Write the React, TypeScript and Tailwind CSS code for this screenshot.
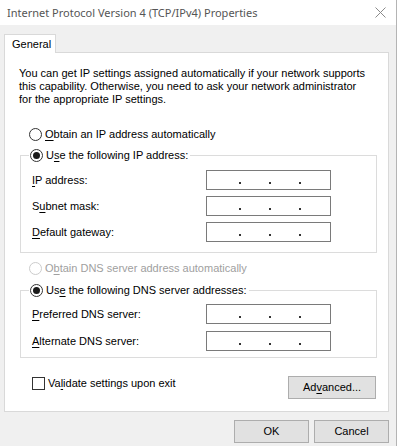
import type { ReactNode } from "react";

const body = "font-['Liberation_Sans',Arial,sans-serif]";
const title = "font-['Noto_Sans',sans-serif]";

function Key({ children }: { children: ReactNode }) {
  return <span className="underline underline-offset-[2px] decoration-[1px]">{children}</span>;
}

function Radio({ checked = false, disabled = false, children }: { checked?: boolean; disabled?: boolean; children: ReactNode }) {
  return (
    <div className={`flex items-center h-[15px] ${disabled ? "text-[#a0a0a0]" : "text-black"}`}>
      <span
        className={`w-[13px] h-[13px] rounded-full border bg-white flex items-center justify-center flex-shrink-0 ${
          disabled ? "border-[#cccccc]" : "border-[#333333]"
        }`}
      >
        {checked && <span className="w-[7px] h-[7px] rounded-full bg-[#1a1a1a]" />}
      </span>
      <span className="ml-[3px] pr-[1px]">{children}</span>
    </div>
  );
}

function IpField() {
  return (
    <div className="w-[125px] h-[20px] border border-[#7a7a7a] bg-white flex items-end pb-[5px] pl-[32px] gap-[28px]">
      <span className="w-[2px] h-[2px] bg-[#333]" />
      <span className="w-[2px] h-[2px] bg-[#333]" />
      <span className="w-[2px] h-[2px] bg-[#333]" />
    </div>
  );
}

function FieldRow({ label }: { label: ReactNode }) {
  return (
    <div className="flex items-center justify-between pl-[11px] pr-[45px]">
      <span>{label}</span>
      <IpField />
    </div>
  );
}

function Button({ className = "", children }: { className?: string; children: ReactNode }) {
  return (
    <div className={`h-[23px] border border-[#adadad] bg-[#e1e1e1] flex items-center justify-center ${className}`}>
      {children}
    </div>
  );
}

export default function App() {
  return (
    <div className={`${body} relative w-[397px] h-[446px] overflow-hidden bg-[#f0f0f0] border-r border-[#b4b4b4] text-[11px] leading-[15px] text-black`}>
      {/* title bar */}
      <div className="h-[25px] bg-white flex items-center justify-between pl-[7px] pr-[10px]">
        <span className={`${title} text-[11px] text-[#555555]`}>Internet Protocol Version 4 (TCP/IPv4) Properties</span>
        <svg width="11" height="11" viewBox="0 0 11 11">
          <path d="M0.5 0.5 L10.5 10.5 M10.5 0.5 L0.5 10.5" stroke="#8a8a8a" strokeWidth="1" />
        </svg>
      </div>

      <div className="pl-[4px] pt-[9px]">
        {/* tab */}
        <div className="relative z-10 -mb-px w-[52px] h-[19px] bg-white border border-b-0 border-[#d9d9d9] pl-[7px] pt-[2px]">
          General
        </div>

        {/* tab panel */}
        <div className="w-[385px] h-[360px] bg-white border border-[#d9d9d9] flex flex-col">
          <p className="ml-[14px] mt-[14px] leading-[13px] whitespace-nowrap">
            You can get IP settings assigned automatically if your network supports
            <br />
            this capability. Otherwise, you need to ask your network administrator
            <br />
            for the appropriate IP settings.
          </p>

          <div className="ml-[24px] mt-[21px]">
            <Radio>
              <Key>O</Key>btain an IP address automatically
            </Radio>
          </div>

          <fieldset className="ml-[15px] mt-[6px] w-[357px] border border-[#dcdcdc] pb-[10px]">
            <legend className="ml-[8px] px-[1px]">
              <Radio checked>
                U<Key>s</Key>e the following IP address:
              </Radio>
            </legend>
            <div className="flex flex-col gap-[6px] mt-[7px]">
              <FieldRow label={<><Key>I</Key>P address:</>} />
              <FieldRow label={<>S<Key>u</Key>bnet mask:</>} />
              <FieldRow label={<><Key>D</Key>efault gateway:</>} />
            </div>
          </fieldset>

          <div className="ml-[24px] mt-[8px]">
            <Radio disabled>
              O<Key>b</Key>tain DNS server address automatically
            </Radio>
          </div>

          <fieldset className="ml-[15px] mt-[7px] w-[357px] border border-[#dcdcdc] pb-[6px]">
            <legend className="ml-[8px] px-[1px]">
              <Radio checked>
                Us<Key>e</Key> the following DNS server addresses:
              </Radio>
            </legend>
            <div className="flex flex-col gap-[7px] mt-[6px]">
              <FieldRow label={<><Key>P</Key>referred DNS server:</>} />
              <FieldRow label={<><Key>A</Key>lternate DNS server:</>} />
            </div>
          </fieldset>

          <div className="ml-[27px] mr-[12px] mt-[18px] flex items-start justify-between">
            <div className="flex items-center">
              <span className="w-[13px] h-[13px] border border-[#333] bg-white" />
              <span className="ml-[3px]">
                Va<Key>l</Key>idate settings upon exit
              </span>
            </div>
            <Button className="w-[88px] h-[21px]">
              Ad<Key>v</Key>anced...
            </Button>
          </div>
        </div>

        {/* dialog buttons */}
        <div className="flex justify-end gap-[5px] pr-[7px] mt-[8px]">
          <Button className="w-[75px]">OK</Button>
          <Button className="w-[75px]">Cancel</Button>
        </div>
      </div>
    </div>
  );
}
